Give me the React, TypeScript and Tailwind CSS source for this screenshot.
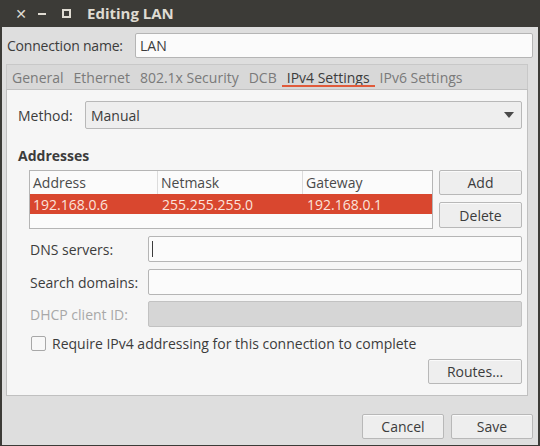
import React from "react";

const font = { fontFamily: '"Open Sans", "DejaVu Sans", sans-serif' };

function Btn({ children, className = "" }: { children: React.ReactNode; className?: string }) {
  return (
    <div
      className={
        "flex items-center justify-center rounded-[2px] border border-[#b8b8b8] bg-[#eeeeee] text-[14px] text-[#3c3c3c] shadow-[inset_0_1px_0_#fafafa] " +
        className
      }
    >
      {children}
    </div>
  );
}

function Field({ className = "", children }: { className?: string; children?: React.ReactNode }) {
  return (
    <div className={"flex items-center rounded-[2px] border border-[#b5b5b5] bg-[#fbfbfb] " + className}>{children}</div>
  );
}

export default function App() {
  return (
    <div className="flex h-[446px] w-[540px] flex-col bg-[#3c3b37] px-[2px] pb-[1px] text-[14px] text-[#3c3c3c]" style={font}>
      {/* title bar */}
      <div className="relative flex h-[27px] shrink-0 items-center text-[#dfdbd2]">
        <span className="ml-[13px] flex w-[12px] justify-center text-[14px] font-bold leading-none">✕</span>
        <span className="ml-[11px] h-[2px] w-[8px] bg-[#dfdbd2]" />
        <span className="ml-[16px] h-[9px] w-[9px] border-[2px] border-[#dfdbd2]" />
        <span className="ml-[16px] text-[15px] font-bold">Editing LAN</span>
      </div>

      <div className="flex flex-1 flex-col bg-[#dedede] px-[4px]">
        {/* connection name */}
        <div className="mt-[6px] flex h-[25px] items-center">
          <span className="ml-[1px] w-[128px] tracking-[-0.2px]">Connection name:</span>
          <Field className="h-[25px] flex-1 mr-[1px] px-[4px]">LAN</Field>
        </div>

        {/* tabs */}
        <div className="mt-[6px] mr-[6px] flex h-[25px] items-end border border-b-0 border-[#c8c8c8] bg-[#d8d8d8] pl-[0px] text-[#7a7a7a]">
          {[
            ["General", false],
            ["Ethernet", false],
            ["802.1x Security", false],
            ["DCB", false],
            ["IPv4 Settings", true],
            ["IPv6 Settings", false],
          ].map(([t, a]) => (
            <div key={t as string} className="relative flex h-full items-center px-[5px]">
              <span className={a ? "text-[#3c3c3c]" : ""}>{t as string}</span>
              {a && <span className="absolute bottom-[2px] left-[0px] right-[0px] h-[2px] bg-[#e05a3a]" />}
            </div>
          ))}
        </div>

        {/* panel */}
        <div className="mr-[6px] flex flex-col border border-[#c0c0c0] bg-[#f6f6f6] pl-[11px] pr-[5px] pb-[11px]">
          <div className="mt-[11px] flex h-[28px] items-center">
            <span className="w-[67px]">Method:</span>
            <div className="flex h-[28px] flex-1 items-center justify-between rounded-[2px] border border-[#b8b8b8] bg-[#eeeeee] pl-[5px] pr-[7px]">
              <span>Manual</span>
              <svg width="10" height="6" viewBox="0 0 10 6"><path d="M0 0h10L5 6z" fill="#4a4a4a" /></svg>
            </div>
          </div>

          <div className="mt-[18px] h-[18px] font-bold leading-[18px]">Addresses</div>

          <div className="mt-[5px] ml-[11px] flex gap-[6px]">
            <div className="h-[59px] w-[404px] border border-[#b5b5b5] bg-[#fbfbfb]">
              <div className="flex h-[23px] items-center text-[#4a4a4a]">
                <div className="flex h-full w-[128px] items-center border-r border-[#dcdcdc] pl-[3px]">Address</div>
                <div className="flex h-full w-[145px] items-center border-r border-[#dcdcdc] pl-[3px]">Netmask</div>
                <div className="flex h-full items-center pl-[3px]">Gateway</div>
              </div>
              <div className="flex h-[20px] items-center bg-[#d9472f] text-[#fbe3dc]">
                <div className="w-[129px] pl-[3px]">192.168.0.6</div>
                <div className="w-[145px] pl-[3px]">255.255.255.0</div>
                <div className="pl-[3px]">192.168.0.1</div>
              </div>
            </div>
            <div className="flex flex-col gap-[7px]">
              <Btn className="h-[25px] w-[83px]">Add</Btn>
              <Btn className="h-[26px] w-[83px]">Delete</Btn>
            </div>
          </div>

          <div className="mt-[7px] ml-[12px] flex h-[26px] items-center">
            <span className="w-[118px]">DNS servers:</span>
            <Field className="h-[26px] flex-1 px-[3px]">
              <span className="h-[16px] w-[1px] bg-[#3c3c3c]" />
            </Field>
          </div>
          <div className="mt-[7px] ml-[12px] flex h-[26px] items-center">
            <span className="w-[118px]">Search domains:</span>
            <Field className="h-[26px] flex-1" />
          </div>
          <div className="mt-[6px] ml-[12px] flex h-[26px] items-center">
            <span className="w-[118px] text-[#a8a8a8]">DHCP client ID:</span>
            <div className="h-[26px] flex-1 rounded-[2px] border border-[#c2c2c2] bg-[#d6d6d6]" />
          </div>

          <div className="mt-[7px] ml-[13px] flex h-[18px] items-center">
            <span className="h-[15px] w-[15px] rounded-[2px] border border-[#a8a8a8] bg-[#f8f8f8]" />
            <span className="ml-[6px]">Require IPv4 addressing for this connection to complete</span>
          </div>

          <div className="mt-[7px] flex justify-end">
            <Btn className="h-[25px] w-[94px]">Routes…</Btn>
          </div>
        </div>

        <div className="mt-[18px] flex justify-end gap-[7px] pr-[1px]">
          <Btn className="h-[25px] w-[82px]">Cancel</Btn>
          <Btn className="h-[25px] w-[82px]">Save</Btn>
        </div>
      </div>
    </div>
  );
}
